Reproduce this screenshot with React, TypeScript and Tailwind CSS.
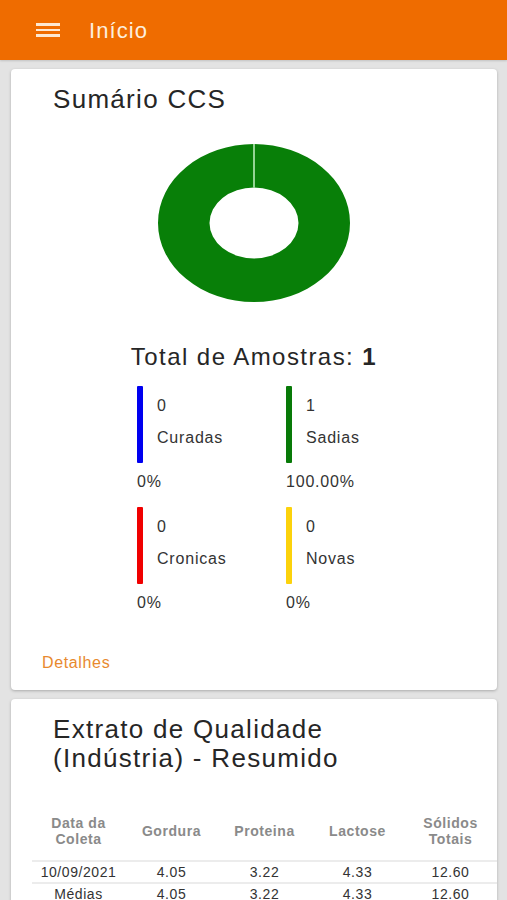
import React from 'react';

type LegendItem = {
    count: number;
    label: string;
    percent: string;
    color: string;
};

const LEGEND: LegendItem[] = [
    { count: 0, label: 'Curadas', percent: '0%', color: 'bg-[#0000f0]' },
    { count: 1, label: 'Sadias', percent: '100.00%', color: 'bg-[#087a08]' },
    { count: 0, label: 'Cronicas', percent: '0%', color: 'bg-[#f00000]' },
    { count: 0, label: 'Novas', percent: '0%', color: 'bg-[#fcd20c]' },
];

const HEADERS = [['Data da', 'Coleta'], ['Gordura'], ['Proteina'], ['Lactose'], ['Sólidos', 'Totais']];

const ROWS = [
    ['10/09/2021', '4.05', '3.22', '4.33', '12.60'],
    ['Médias', '4.05', '3.22', '4.33', '12.60'],
];

// Donut for the CCS summary (only "Sadias" has samples, so it's a full ring)
const Donut: React.FC = () => (
    <svg width="194" height="160" viewBox="0 0 194 160" className="block">
        <path
            fillRule="evenodd"
            fill="#087f08"
            d="M1 80 A96 79 0 1 0 193 80 A96 79 0 1 0 1 80 Z M52.5 80 A44.5 35.5 0 1 0 141.5 80 A44.5 35.5 0 1 0 52.5 80 Z"
        />
        <line x1="97" y1="1" x2="97" y2="44.5" stroke="#b8eab8" strokeWidth="1.6" />
    </svg>
);

const Legend: React.FC<{ item: LegendItem }> = ({ item }) => (
    <div>
        <div className="flex">
            <div className={`w-[6px] h-[77px] rounded-[1px] ${item.color}`} />
            <div className="pl-[14px] pt-[8px] flex flex-col">
                <span className="leading-[24px]">{item.count}</span>
                <span className="leading-[24px] mt-[8px]">{item.label}</span>
            </div>
        </div>
        <div className="leading-[24px] mt-[7px]">{item.percent}</div>
    </div>
);

export default function App() {
    return (
        <div
            className="min-h-[900px] bg-[#e3e3e3] text-[#2a2a2a]"
            style={{ fontFamily: '"Liberation Sans", Arial, sans-serif' }}
        >
            <header className="h-[60px] bg-[#ef6c00] flex items-center shadow-[0_1px_2px_rgba(0,0,0,0.15)]">
                <div className="ml-[36px] w-[24px] flex flex-col gap-[3px]">
                    <span className="h-[2.5px] bg-[#fde8d2]" />
                    <span className="h-[2.5px] bg-[#fde8d2]" />
                    <span className="h-[2.5px] bg-[#fde8d2]" />
                </div>
                <h1 className="ml-[29px] text-[22px] tracking-[0.05em] text-[#fdeedd]">Início</h1>
            </header>

            <main className="pl-[11px] pr-[10px] pt-[9px] flex flex-col gap-[9px]">
                <section className="bg-white rounded-[4px] shadow-[0_1px_3px_rgba(0,0,0,0.25)] pt-[14px] pb-[15px]">
                    <h2 className="pl-[42px] text-[26px] leading-[32px] tracking-[0.05em] text-[#262626]">Sumário CCS</h2>

                    <div className="flex justify-center mt-[28px] pr-[1px]">
                        <Donut />
                    </div>

                    <p className="mt-[40px] text-center text-[24px] leading-[28px] tracking-[0.06em] text-[#262626]">
                        Total de Amostras: <b>1</b>
                    </p>

                    <div className="mt-[15px] ml-[126px] grid grid-cols-[149px_149px] gap-y-[13px] text-[16px] tracking-[0.05em] text-[#333]">
                        {LEGEND.map((item) => (
                            <Legend key={item.label} item={item} />
                        ))}
                    </div>

                    <div className="mt-[36px] pl-[31px] text-[16px] leading-[24px] tracking-[0.04em] text-[#e8892e]">
                        Detalhes
                    </div>
                </section>

                <section className="bg-white rounded-[4px] shadow-[0_1px_3px_rgba(0,0,0,0.25)] pt-[16px] pb-[20px] overflow-hidden">
                    <h2 className="pl-[42px] w-[400px] text-[26px] leading-[29px] tracking-[0.05em] text-[#262626]">
                        Extrato de Qualidade (Indústria) - Resumido
                    </h2>

                    <div className="mt-[42px] ml-[21px] text-[14px] tracking-[0.04em]">
                        <div className="grid grid-cols-5 pb-[13px] font-bold text-[#8a8a8a]">
                            {HEADERS.map((lines) => (
                                <div key={lines[0]} className="flex flex-col items-center justify-center text-center leading-[16px]">
                                    {lines.map((l) => (
                                        <span key={l}>{l}</span>
                                    ))}
                                </div>
                            ))}
                        </div>
                        {ROWS.map((row) => (
                            <div key={row[0]} className="grid grid-cols-5 border-t-2 border-[#ececec] text-[#333] leading-[20px]">
                                {row.map((cell, i) => (
                                    <div key={i} className="text-center">
                                        {cell}
                                    </div>
                                ))}
                            </div>
                        ))}
                    </div>
                </section>
            </main>
        </div>
    );
}
